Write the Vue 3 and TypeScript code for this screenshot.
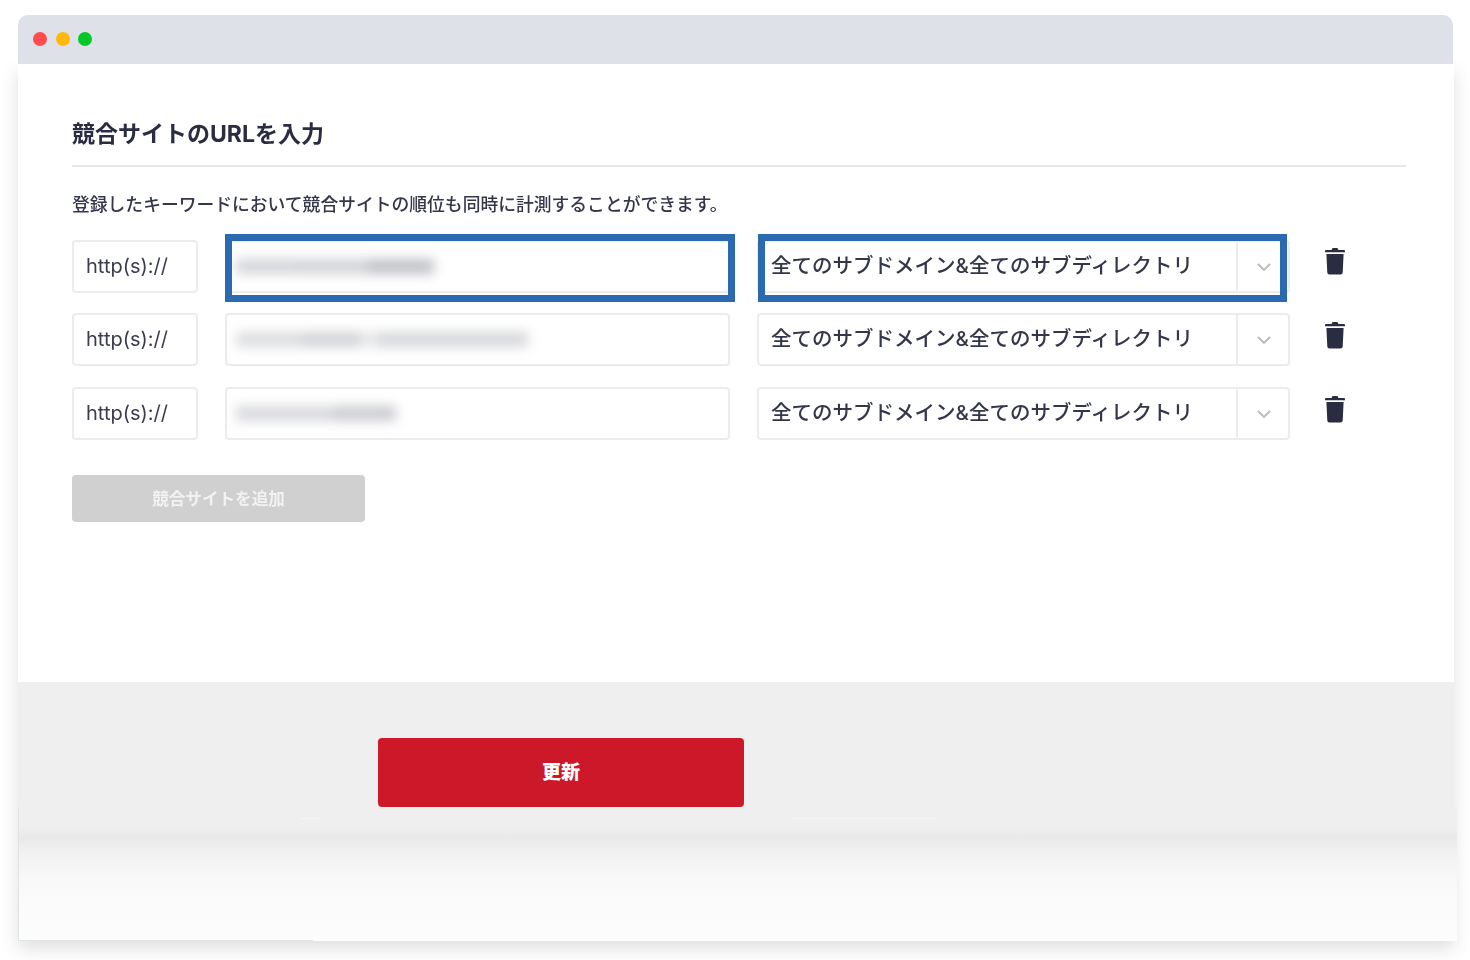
<script setup lang="ts">
interface Row {
  id: number
  focused: boolean
  blur: { width: number; tone: string }[]
}

const scopeLabel = '全てのサブドメイン&全てのサブディレクトリ'

const rows: Row[] = [
  { id: 1, focused: true, blur: [{ width: 62, tone: '#d4d5d9' }, { width: 70, tone: '#d2d3d7' }, { width: 66, tone: '#c0c1c6' }] },
  { id: 2, focused: false, blur: [{ width: 66, tone: '#dcdde0' }, { width: 58, tone: '#d2d3d7' }, { width: 18, tone: '#e6e7ea' }, { width: 150, tone: '#d6d7db' }] },
  { id: 3, focused: false, blur: [{ width: 98, tone: '#d8d9dd' }, { width: 62, tone: '#cbccd0' }] }
]
</script>

<template>
  <div class="page">
    <div class="window">
      <div class="titlebar">
        <span class="dot red"></span>
        <span class="dot yellow"></span>
        <span class="dot green"></span>
      </div>

      <div class="panel">
        <section class="content">
          <h1 class="title">競合サイトのURLを入力</h1>
          <p class="desc">登録したキーワードにおいて競合サイトの順位も同時に計測することができます。</p>

          <div class="rows">
            <div v-for="row in rows" :key="row.id" class="row">
              <div class="box scheme">http(s)://</div>
              <div class="box url" :class="{ focused: row.focused }">
                <div class="smear" aria-hidden="true">
                  <span
                    v-for="(part, i) in row.blur"
                    :key="i"
                    :style="{ width: part.width + 'px', background: part.tone }"
                  ></span>
                </div>
              </div>
              <div class="box scope" :class="{ focused: row.focused }">
                <span class="scope-text">{{ scopeLabel }}</span>
                <span class="caret">
                  <svg width="16" height="10" viewBox="0 0 16 10" fill="none">
                    <path d="M2 2l6 6 6-6" stroke="#b9b9bc" stroke-width="1.8" />
                  </svg>
                </span>
              </div>
              <button class="trash" type="button" aria-label="削除">
                <svg width="22" height="28" viewBox="0 0 22 28">
                  <path
                    fill="#2a2c41"
                    d="M7.5 3 8.6 1h4.8l1.1 2H20a1 1 0 0 1 1 1v1.200H1V4a1 1 0 0 1 1-1h5.500ZM2.400 7h17.200l-.9 18.400A2.200 2.200 0 0 1 16.500 27.500h-11a2.200 2.200 0 0 1-2.200-2.100L2.400 7Z"
                  />
                </svg>
              </button>
            </div>
          </div>

          <button class="add" type="button">競合サイトを追加</button>
        </section>

        <footer class="foot-top">
          <button class="update" type="button">更新</button>
        </footer>
        <div class="foot-bottom"></div>
      </div>
    </div>
  </div>
</template>

<style>
html,
body {
  margin: 0;
  background: #fff;
}
</style>

<style scoped>
.page {
  width: 1470px;
  height: 960px;
  padding: 15px 0 0 18px;
  box-sizing: border-box;
  overflow: hidden;
  background: #fff;
  font-family: Inter, "Noto Sans CJK JP", sans-serif;
  color: #2a2c41;
}

.window {
  width: 1436px;
}

.titlebar {
  position: relative;
  z-index: 1;
  display: flex;
  align-items: center;
  gap: 8.5px;
  width: 1435px;
  height: 49px;
  padding: 0 0 1px 15px;
  box-sizing: border-box;
  background: #dee1e8;
  border-radius: 10px 10px 0 0;
}

.dot {
  width: 14px;
  height: 14px;
  border-radius: 50%;
}
.red { background: #ff4d4d; }
.yellow { background: #ffb90c; }
.green { background: #04c829; }

.panel {
  box-shadow: 0 8px 16px rgba(60, 60, 60, 0.16);
}

.content {
  height: 618px;
  padding: 55px 48px 0 54px;
  box-sizing: border-box;
  background: #fff;
}

.title {
  margin: 0;
  height: 46px;
  font-size: 23px;
  line-height: 30px;
  font-weight: 700;
  border-bottom: 2px solid #e6e6e6;
  filter: blur(0.5px);
}

.desc {
  margin: 25px 0 0;
  font-size: 17.8px;
  line-height: 26px;
  font-weight: 500;
  color: #34364a;
  filter: blur(0.5px);
}

.rows {
  margin-top: 22px;
  display: flex;
  flex-direction: column;
  gap: 20px;
}

.row {
  display: flex;
  align-items: flex-start;
  gap: 27px;
  height: 53px;
}
.row:last-child {
  margin-top: 1px;
}

.box {
  position: relative;
  height: 53px;
  box-sizing: border-box;
  background: #fff;
  border: 2px solid #ececec;
  border-radius: 4px;
}

.scheme {
  width: 126px;
  padding-left: 12px;
  font-size: 20px;
  line-height: 49px;
  color: #3a3c4e;
  filter: blur(0.5px);
}

.url {
  width: 505px;
}

.smear {
  display: flex;
  align-items: center;
  height: 100%;
  padding-left: 9px;
  filter: blur(6px);
}
.smear span {
  height: 15px;
}

.scope {
  display: flex;
  width: 533px;
}

.scope-text {
  flex: 1;
  padding-left: 12px;
  font-size: 20.5px;
  line-height: 48px;
  font-weight: 500;
  white-space: nowrap;
  color: #34364a;
  filter: blur(0.5px);
}

.caret {
  display: flex;
  align-items: center;
  justify-content: center;
  padding-left: 1px;
  width: 49px;
  border-left: 2px solid #ececec;
}

.focused::after {
  content: "";
  position: absolute;
  top: -8px;
  height: 68px;
  box-sizing: border-box;
  border: 7px solid #2b69b0;
}
.url.focused::after {
  left: -2px;
  width: 510px;
}
.scope.focused::after {
  left: -1px;
  width: 529px;
}

.trash {
  margin: 7px 0 0 7px;
  padding: 0;
  width: 22px;
  height: 28px;
  border: 0;
  background: none;
  line-height: 0;
}
.row:not(:first-child) .trash {
  margin-top: 8px;
}

.add {
  display: block;
  margin-top: 35px;
  width: 293px;
  height: 47px;
  padding: 0 0 2px;
  border: 0;
  border-radius: 4px;
  background: #d0d0d0;
  color: #f2f2f2;
  font-family: inherit;
  font-size: 16.6px;
  font-weight: 700;
  filter: blur(0.3px);
}

.foot-top {
  height: 125px;
  padding: 56px 0 0 360px;
  box-sizing: border-box;
  background: #efefef;
}

.update {
  display: block;
  width: 366px;
  height: 69px;
  padding: 0 0 4px;
  border: 0;
  border-radius: 4px;
  background: #cc1829;
  color: #fff;
  font-family: inherit;
  font-size: 19px;
  font-weight: 900;
}

.foot-bottom {
  width: 1439px;
  height: 134px;
  box-sizing: border-box;
  border-left: 1px solid #dfe4e6;
  background:
    linear-gradient(#dfe4e6, #dfe4e6) 0 100% / 294px 1px no-repeat,
    linear-gradient(#f5f5f5, #f5f5f5) 281px 11px / 20px 1px no-repeat,
    linear-gradient(#f5f5f5, #f5f5f5) 771px 11px / 146px 1px no-repeat,
    linear-gradient(
      #efefef 0,
      #efefef 20px,
      #e9e9e9 31px,
      #f1f1f1 44px,
      #f8f8f8 70px,
      #fbfbfb 100px,
      #fdfdfd 134px
    );
}
</style>
